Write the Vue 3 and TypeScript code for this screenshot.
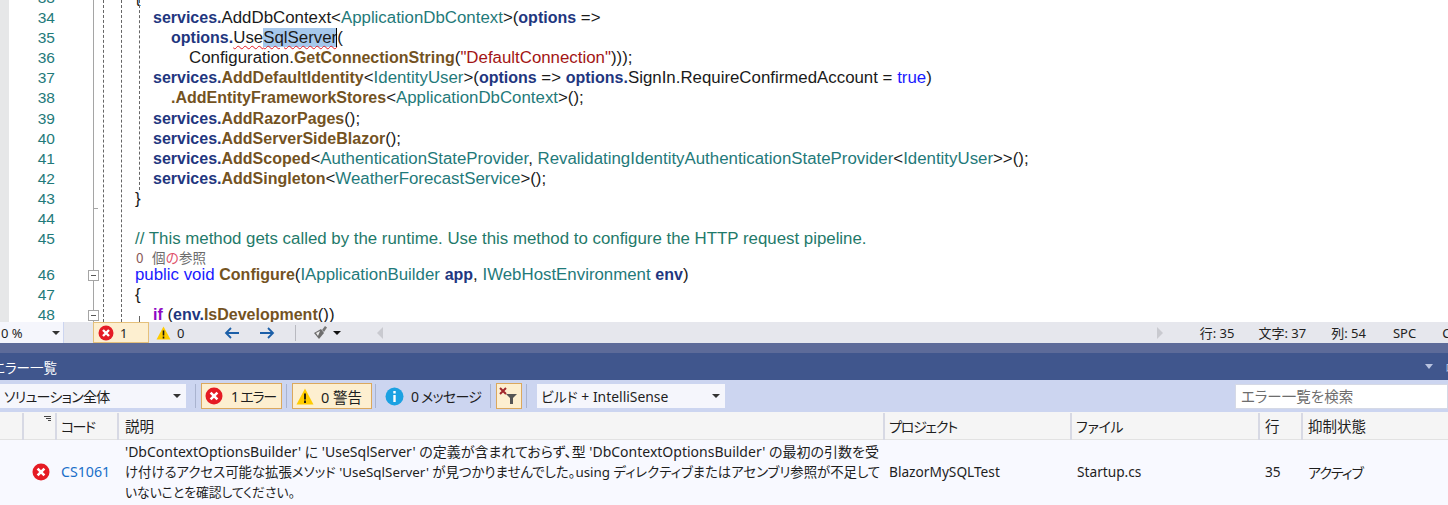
<script setup lang="ts">
type Tok = [string, string]
interface Line { n: string; indent: string; toks: Tok[]; lens?: boolean; fold?: boolean }
const lines: Line[] = [
  { n: '33', indent: 'i0', toks: [['p', '{']] },
  { n: '34', indent: 'i1', toks: [['v', 'services.'], ['p', 'AddDbContext<'], ['t', 'ApplicationDbContext'], ['p', '>('], ['v', 'options'], ['p', ' =>']] },
  { n: '35', indent: 'i2', toks: [['v', 'options.'], ['p err', 'Use'], ['p err sel', 'SqlServer'], ['p caret', '(']] },
  { n: '36', indent: 'i3', toks: [['p', 'Configuration.'], ['m', 'GetConnectionString'], ['p', '('], ['s', '"DefaultConnection"'], ['p', ')));']] },
  { n: '37', indent: 'i1', toks: [['v', 'services.'], ['m', 'AddDefaultIdentity'], ['p', '<'], ['t', 'IdentityUser'], ['p', '>('], ['v', 'options'], ['p', ' => '], ['v', 'options.'], ['p', 'SignIn.RequireConfirmedAccount = '], ['k', 'true'], ['p', ')']] },
  { n: '38', indent: 'i2', toks: [['m', '.AddEntityFrameworkStores'], ['p', '<'], ['t', 'ApplicationDbContext'], ['p', '>();']] },
  { n: '39', indent: 'i1', toks: [['v', 'services.'], ['m', 'AddRazorPages'], ['p', '();']] },
  { n: '40', indent: 'i1', toks: [['v', 'services.'], ['m', 'AddServerSideBlazor'], ['p', '();']] },
  { n: '41', indent: 'i1', toks: [['v', 'services.'], ['m', 'AddScoped'], ['p', '<'], ['t', 'AuthenticationStateProvider'], ['p', ', '], ['t', 'RevalidatingIdentityAuthenticationStateProvider'], ['p', '<'], ['t', 'IdentityUser'], ['p', '>>();']] },
  { n: '42', indent: 'i1', toks: [['v', 'services.'], ['m', 'AddSingleton'], ['p', '<'], ['t', 'WeatherForecastService'], ['p', '>();']] },
  { n: '43', indent: 'i0', toks: [['p', '}']] },
  { n: '44', indent: 'i0', toks: [] },
  { n: '45', indent: 'i0', toks: [['c', '// This method gets called by the runtime. Use this method to configure the HTTP request pipeline.']], lens: true },
  { n: '46', indent: 'i0', toks: [['k', 'public void '], ['m', 'Configure'], ['p', '('], ['t', 'IApplicationBuilder'], ['p', ' '], ['v', 'app'], ['p', ', '], ['t', 'IWebHostEnvironment'], ['p', ' '], ['v', 'env'], ['p', ')']], fold: true },
  { n: '47', indent: 'i0', toks: [['p', '{']] },
  { n: '48', indent: 'i1', toks: [['ctl', 'if'], ['p', ' ('], ['v', 'env.'], ['m', 'IsDevelopment'], ['p', '())']], fold: true },
]
const columns = ['', '', 'コード', '説明', 'プロジェクト', 'ファイル', '行', '抑制状態']
const descLines = [
  "'DbContextOptionsBuilder' に 'UseSqlServer' の定義が含まれておらず、型 'DbContextOptionsBuilder' の最初の引数を受",
  "け付けるアクセス可能な拡張メソッド 'UseSqlServer' が見つかりませんでした。using ディレクティブまたはアセンブリ参照が不足して",
  'いないことを確認してください。',
]
</script>

<template>
  <div class="ide">
    <section class="editor">
      <div class="strip"></div>
      <div class="code">
        <template v-for="l in lines" :key="l.n">
          <div class="line">
            <span class="num">{{ l.n }}</span>
            <span class="margin"><i v-if="l.fold" class="fold"></i></span>
            <span class="text" :class="l.indent"><span v-for="(t, i) in l.toks" :key="i" :class="t[0]">{{ t[1] }}</span></span>
          </div>
          <div v-if="l.lens" class="lens"><span class="lens-0">0</span>個<span class="lens-no">の</span>参照</div>
        </template>
      </div>
      <i class="outline"></i><i class="tick"></i>
      <i class="guide g1"></i><i class="guide g2"></i><i class="guide g3"></i><i class="guide g4"></i>
    </section>

    <section class="status">
      <div class="zoom"><span>0 %</span><i class="tri"></i></div>
      <div class="err-btn">
        <svg width="16" height="16" viewBox="0 0 16 16"><circle cx="8" cy="8" r="7.5" fill="#e51b24"/><path d="M5 5l6 6M11 5l-6 6" stroke="#fff" stroke-width="2.4"/></svg>
        <span>1</span>
      </div>
      <div class="warn">
        <svg width="15" height="14" viewBox="0 0 15 14"><path d="M7.5 0.5L14.5 13.5H0.5Z" fill="#ffcc00"/><path d="M7.5 4.5v5M7.5 10.5v2" stroke="#111" stroke-width="1.6"/></svg>
        <span>0</span>
      </div>
      <svg class="arrow a1" width="16" height="12" viewBox="0 0 16 12"><path d="M15 6H2M7 1L2 6l5 5" fill="none" stroke="#1c5fa8" stroke-width="1.8"/></svg>
      <svg class="arrow a2" width="16" height="12" viewBox="0 0 16 12"><path d="M1 6h13M9 1l5 5-5 5" fill="none" stroke="#1c5fa8" stroke-width="1.8"/></svg>
      <i class="vsep"></i>
      <svg class="brush" width="15" height="15" viewBox="0 0 15 15"><path d="M9 5l3-4 2 1.5-3 4.5z" fill="#777"/><path d="M1 8l7-4 3 4-5 6z" fill="#6d6d6d"/><path d="M3 8l4-2-2 5z" fill="#eee"/></svg>
      <i class="tri dark"></i>
      <i class="scroll-l"></i>
      <div class="grow"></div>
      <i class="scroll-r"></i>
      <span class="st st1">行: 35</span>
      <span class="st st2">文字: 37</span>
      <span class="st st3">列: 54</span>
      <span class="st st4">SPC</span>
      <span class="st st5">CRLF</span>
    </section>

    <div class="band"></div>

    <section class="title">
      <span class="title-text">エラー一覧</span>
      <div class="grow"></div>
      <i class="title-tri"></i>
      <span class="title-pin">ロ</span>
    </section>

    <section class="toolbar">
      <div class="drop d1"><span>ソリューション全体</span><i class="tri"></i></div>
      <i class="tsep s1"></i>
      <div class="tbtn b1">
        <svg width="18" height="18" viewBox="0 0 18 18"><circle cx="9" cy="9" r="8.5" fill="#e51b24"/><path d="M5.6 5.6l6.8 6.8M12.4 5.6l-6.8 6.8" stroke="#fff" stroke-width="2.6"/></svg>
        <span class="t-err">1 エラー</span>
      </div>
      <i class="tsep s2"></i>
      <div class="tbtn b2">
        <svg width="18" height="17" viewBox="0 0 18 17"><path d="M9 0.5L17.5 16.5H0.5Z" fill="#ffcc00"/><path d="M9 5.5v6M9 12.5v2.5" stroke="#111" stroke-width="1.8"/></svg>
        <span class="t-warn">0 警告</span>
      </div>
      <i class="tsep s3"></i>
      <div class="info">
        <svg width="19" height="19" viewBox="0 0 19 19"><circle cx="9.5" cy="9.5" r="9" fill="#1ba1e2"/><path d="M9.5 4v2.4M9.5 8v7" stroke="#fff" stroke-width="2.4"/></svg>
        <span class="t-info">0 メッセージ</span>
      </div>
      <i class="tsep s4"></i>
      <div class="filter">
        <svg width="20" height="18" viewBox="0 0 20 18"><path d="M1 1l6 6M7 1L1 7" stroke="#a1262c" stroke-width="2"/><path d="M7 7h11l-4 4v6h-3v-6z" fill="#555"/></svg>
      </div>
      <i class="tsep s5"></i>
      <div class="drop d2"><span>ビルド + IntelliSense</span><i class="tri"></i></div>
      <div class="grow"></div>
      <div class="search">エラー一覧を検索</div>
    </section>

    <section class="thead">
      <div v-for="(c, i) in columns" :key="i" class="th" :class="'c' + i">
        <svg v-if="i === 1" class="sort" width="7" height="6" viewBox="0 0 7 6"><path d="M0 0h7v1H0zM2 2h5v1H2zM4 4h3v1H4z" fill="#444"/></svg>{{ c }}
      </div>
    </section>

    <section class="row">
      <div></div>
      <div class="cell icon">
        <svg width="18" height="18" viewBox="0 0 18 18"><circle cx="9" cy="9" r="8.5" fill="#e51b24"/><path d="M5.6 5.6l6.8 6.8M12.4 5.6l-6.8 6.8" stroke="#fff" stroke-width="2.6"/></svg>
      </div>
      <div class="cell link">CS1061</div>
      <div class="cell desc"><div v-for="(d, i) in descLines" :key="i" :class="'dl' + i">{{ d }}</div></div>
      <div class="cell proj">BlazorMySQLTest</div>
      <div class="cell">Startup.cs</div>
      <div class="cell">35</div>
      <div class="cell active">アクティブ</div>
    </section>
  </div>
</template>

<style>
html, body { margin: 0; background: #fff; overflow: hidden; }
</style>

<style scoped>
.ide { width: 1448px; height: 505px; overflow: hidden; display: flex; flex-direction: column; font-family: "Noto Sans", "Noto Sans CJK JP", sans-serif; font-feature-settings: "palt"; color: #1e1e1e; }
i { display: block; font-style: normal; }
svg { flex: none; }
.grow { flex: 1; }

.editor { position: relative; height: 322px; flex: none; overflow: hidden; background: #fff; }
.strip { position: absolute; left: 0; top: 0; bottom: 0; width: 9px; background: #e6e7e8; }
.code { margin-top: -12px; font-family: "Liberation Sans", Arial, sans-serif; font-size: 16.85px; }
.line { display: flex; height: 20.1px; line-height: 20.1px; white-space: pre; }
.num { width: 55px; flex: none; text-align: right; color: #1f7a7a; font-size: 15.5px; }
.margin { width: 80px; flex: none; position: relative; }
.fold { position: absolute; left: 33px; top: 5px; width: 9px; height: 9px; border: 1px solid #a5a5a5; background: #fff; z-index: 2; }
.fold::after { content: ""; position: absolute; left: 2px; top: 4px; width: 5px; height: 1px; background: #555; }
.i0 { padding-left: 0; }
.i1 { padding-left: 18px; }
.i2 { padding-left: 36px; }
.i3 { padding-left: 54px; }
.p { color: #1a1a1a; }
.v { color: #1f377f; font-weight: 700; font-size: 16px; }
.m { color: #74531f; font-weight: 700; font-size: 16px; }
.t { color: #1f7a7a; }
.s { color: #a31515; }
.k { color: #1a1aff; }
.c { color: #1f7a6a; }
.ctl { color: #8f08c4; font-weight: 700; font-size: 16px; }
.err { text-decoration: underline wavy #e51b24 1px; text-underline-offset: 2px; }
.sel { background: #a6c8ec; }
.caret { border-left: 1px solid #000; margin-left: -1px; }
.lens { height: 16px; line-height: 16px; padding-left: 136px; font-size: 13.5px; color: #6a6a6a; font-family: "Noto Sans CJK JP", sans-serif; font-feature-settings: normal; }
.lens-0 { color: #8a5a5a; display: inline-block; width: 16px; }
.lens-no { color: #e0506a; }
.outline { position: absolute; left: 93px; top: 0; bottom: 0; width: 1px; background: #a5a5a5; }
.tick { position: absolute; left: 93px; top: 208px; width: 5px; height: 1px; background: #a5a5a5; }
.guide { position: absolute; width: 0; border-left: 1px dashed #666; }
.g1 { left: 103px; top: 0; bottom: 0; }
.g2 { left: 121px; top: 0; bottom: 0; }
.g3 { left: 139px; top: 0; height: 190px; }
.g4 { left: 139px; top: 316px; bottom: 0; }

.status { height: 21px; flex: none; background: #e6e7ed; display: flex; align-items: center; font-size: 13px; position: relative; }
.zoom { width: 64px; height: 21px; box-sizing: border-box; background: #f5f6fc; border-right: 1px solid #ccd5f0; display: flex; align-items: center; justify-content: space-between; padding: 0 2px 0 1px; }
.tri { width: 0; height: 0; border-left: 4px solid transparent; border-right: 4px solid transparent; border-top: 4px solid #333; flex: none; }
.zoom .tri { margin-right: 1px; }
.err-btn { margin-left: 29px; width: 56px; height: 21px; box-sizing: border-box; background: #fdefd0; border: 1px solid #e5c07b; display: flex; align-items: center; gap: 6px; padding-left: 4px; }
.warn { margin-left: 7px; display: flex; align-items: center; gap: 6px; }
.a1 { margin-left: 40px; }
.a2 { margin-left: 19px; }
.vsep { width: 1px; height: 16px; background: #b8b9c0; margin-left: 20px; }
.brush { margin-left: 17px; }
.dark { margin-left: 5px; border-top-color: #111; }
.scroll-l { margin-left: 36px; border-top: 6px solid transparent; border-bottom: 6px solid transparent; border-right: 6px solid #c9cad0; }
.scroll-r { border-top: 6px solid transparent; border-bottom: 6px solid transparent; border-left: 6px solid #c9cad0; margin-right: 37px; }
.st { white-space: nowrap; color: #222; }
.st2 { margin-left: 24px; }
.st3 { margin-left: 25px; }
.st4 { margin-left: 27px; }
.st5 { margin-left: 26px; margin-right: -24px; }

.band { height: 10px; flex: none; background: #5d6b99; }
.title { height: 27px; flex: none; background: #40568d; display: flex; align-items: center; color: #fff; font-size: 13.5px; }
.title-text { margin-left: -8px; }
.title-tri { border-left: 4.5px solid transparent; border-right: 4.5px solid transparent; border-top: 5px solid #b9c3e0; margin-right: 12px; }
.title-pin { color: #b9c3e0; margin-right: -8px; font-size: 11px; }

.toolbar { height: 32px; flex: none; background: #ccd5f0; display: flex; align-items: center; font-size: 13.5px; }
.drop { height: 24px; box-sizing: border-box; background: #f5f6fc; display: flex; align-items: center; justify-content: space-between; white-space: nowrap; padding-bottom: 1px; }
.d1 { width: 186px; padding-left: 4px; padding-right: 5px; font-size: 14px; letter-spacing: -0.75px; }
.d2 { width: 188px; padding-left: 4px; padding-right: 5px; font-size: 13.9px; margin-left: 10px; }
.tsep { width: 1px; height: 24px; background: #a9b3cf; }
.s1 { margin-left: 9px; }
.s2 { margin-left: 4px; }
.s3 { margin-left: 3px; }
.s4 { margin-left: 12px; }
.s5 { margin-left: 4px; }
.tbtn { height: 26px; box-sizing: border-box; background: #fdefd0; border: 1px solid #dba85e; display: flex; align-items: center; gap: 7px; padding-left: 3px; white-space: nowrap; }
.b1 { width: 81px; margin-left: 5px; }
.b2 { width: 80px; margin-left: 5px; }
.t-err { font-size: 14px; letter-spacing: -1.2px; margin-left: 1px; }
.t-warn { font-size: 14.5px; }
.t-info { font-size: 14px; letter-spacing: -0.75px; }
.info { display: flex; align-items: center; gap: 7px; margin-left: 9px; white-space: nowrap; width: 93px; }
.filter { width: 26px; height: 26px; box-sizing: border-box; background: #fdefd0; border: 1px solid #dba85e; margin-left: 5px; display: flex; align-items: center; justify-content: center; }
.search { width: 213px; height: 25px; box-sizing: border-box; background: #fff; border: 1px solid #d5d9e6; padding-left: 5px; line-height: 22px; color: #6d6d6d; font-size: 14.5px; }

.thead, .row { display: grid; grid-template-columns: 24px 33px 62px 766px 187px 188px 43px 145px; }
.thead { height: 28px; flex: none; background: #f5f5f5; font-size: 14.5px; border-bottom: 1px solid #e2e2e2; box-sizing: border-box; }
.th { border-right: 2px solid #d7d9e4; box-sizing: border-box; padding-left: 5px; line-height: 27px; margin: 1px 0 1px; position: relative; white-space: nowrap; }
.th:last-child { border-right: 0; }
.c2 { font-size: 14px; letter-spacing: -1.6px; padding-left: 4px; }
.c3 { padding-left: 6px; }
.c4 { font-size: 14px; letter-spacing: -1.2px; padding-left: 4px; }
.c5 { font-size: 14px; letter-spacing: -0.3px; padding-left: 4px; }
.sort { position: absolute; left: 20px; top: 3px; }
.row { flex: 1; background: #f8f9ff; font-size: 13.7px; }
.cell { display: flex; align-items: center; padding-left: 5px; padding-bottom: 2px; white-space: nowrap; }
.icon { padding-left: 8px; }
.link { color: #1a6fc9; font-size: 14.2px; padding-left: 4px; }
.desc { display: block; padding: 2px 0 0 6px; line-height: 20px; overflow: hidden; }
.dl0 { font-size: 14px; }
.dl1 { font-size: 13.4px; }
.dl2 { font-size: 12.8px; }
.proj { padding-left: 4px; }
.active { font-size: 14px; letter-spacing: -1px; }
</style>
